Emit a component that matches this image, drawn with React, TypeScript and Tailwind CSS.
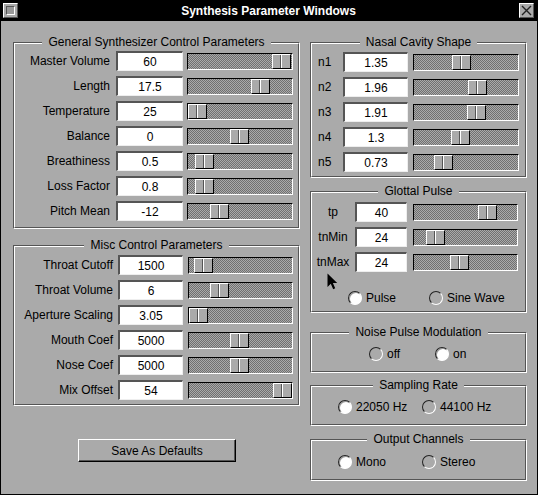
import React from 'react'

type Row = { label: string; value: string; knob: number }

const general: Row[] = [
  { label: 'Master Volume', value: '60', knob: 85 },
  { label: 'Length', value: '17.5', knob: 64 },
  { label: 'Temperature', value: '25', knob: 1 },
  { label: 'Balance', value: '0', knob: 43 },
  { label: 'Breathiness', value: '0.5', knob: 8 },
  { label: 'Loss Factor', value: '0.8', knob: 8 },
  { label: 'Pitch Mean', value: '-12', knob: 23 },
]

const misc: Row[] = [
  { label: 'Throat Cutoff', value: '1500', knob: 6 },
  { label: 'Throat Volume', value: '6', knob: 22 },
  { label: 'Aperture Scaling', value: '3.05', knob: 1 },
  { label: 'Mouth Coef', value: '5000', knob: 42 },
  { label: 'Nose Coef', value: '5000', knob: 42 },
  { label: 'Mix Offset', value: '54', knob: 85 },
]

const nasal: Row[] = [
  { label: 'n1', value: '1.35', knob: 39 },
  { label: 'n2', value: '1.96', knob: 55 },
  { label: 'n3', value: '1.91', knob: 54 },
  { label: 'n4', value: '1.3', knob: 38 },
  { label: 'n5', value: '0.73', knob: 21 },
]

const glottal: Row[] = [
  { label: 'tp', value: '40', knob: 65 },
  { label: 'tnMin', value: '24', knob: 13 },
  { label: 'tnMax', value: '24', knob: 37 },
]

function Slider({ knob, className }: { knob: number; className: string }) {
  return (
    <div className={`relative h-[17px] border border-t-black border-l-black border-b-white border-r-white bg-[repeating-conic-gradient(#707070_0%_25%,#aaa_0%_50%)] bg-[length:2px_2px] ${className}`}>
      <div
        className="absolute top-0 h-[15px] w-[19px] flex border border-t-white border-l-white border-b-black border-r-black bg-[#aaa]"
        style={{ left: knob - 1 }}
      >
        <div className="w-[8px] h-full border-r border-r-[#555]" />
        <div className="flex-1 h-full border-l border-l-white" />
      </div>
    </div>
  )
}

function Field({ value, className }: { value: string; className: string }) {
  return (
    <div className={`h-[20px] bg-white border-t-2 border-l-2 border-b border-r border-t-[#555] border-l-[#555] border-b-[#eee] border-r-[#eee] flex items-center justify-center text-[12px] text-black ${className}`}>
      {value}
    </div>
  )
}

function Group({ title, className, children }: { title: string; className: string; children?: React.ReactNode }) {
  return (
    <div className={`relative border border-t-[#555] border-l-[#555] border-b-white border-r-white ${className}`}>
      <div className="h-full border border-t-white border-l-white border-b-[#555] border-r-[#555]">{children}</div>
      <div className="absolute -top-[8px] left-0 right-0 flex justify-center">
        <span className="bg-[#aaa] px-[6px] text-[12px] leading-[14px] text-black">{title}</span>
      </div>
    </div>
  )
}

function Radio({ label, on }: { label: string; on?: boolean }) {
  return (
    <div className="flex items-center">
      {on ? (
        <div className="w-[14px] h-[14px] rounded-full border border-t-[#222] border-l-[#222] border-b-white border-r-white bg-white shadow-[inset_1px_1px_0_#999]" />
      ) : (
        <div className="w-[14px] h-[14px] rounded-full border border-t-[#222] border-l-[#222] border-b-white border-r-white bg-[#aaa]" />
      )}
      <span className="ml-[4px] text-[12px] text-black">{label}</span>
    </div>
  )
}

export default function App() {
  return (
    <div className="w-[538px] h-[495px] bg-[#aaa] border-l border-r border-b border-black flex flex-col font-['Liberation_Sans',Arial,sans-serif] text-[12px] text-black">
      <div className="h-[21px] bg-black flex items-center shrink-0">
        <div className="ml-[2px] w-[15px] h-[15px] border border-t-white border-l-white border-b-[#555] border-r-[#555] bg-[#aaa] p-[2px]">
          <div className="w-full h-full border border-t-[#555] border-l-[#555] border-b-white border-r-white bg-[#999]" />
        </div>
        <div className="flex-1 text-center text-white font-bold text-[12px]">Synthesis Parameter Windows</div>
        <div className="mr-[3px] w-[15px] h-[15px] border border-t-white border-l-white border-b-[#555] border-r-[#555] bg-[#aaa] flex items-center justify-center">
          <svg width="11" height="11" viewBox="0 0 11 11">
            <path d="M1 1 L10 10 M10 1 L1 10" stroke="#222" strokeWidth="1.4" />
          </svg>
        </div>
      </div>

      <div className="flex pl-[12px] pt-[21px]">
        <div className="w-[287px] flex flex-col">
          <Group title="General Synthesizer Control Parameters" className="h-[187px]">
            <div className="flex flex-col gap-[5px] pt-[7px]">
              {general.map((r) => (
                <div key={r.label} className="flex items-center h-[20px]">
                  <div className="w-[95px] text-right text-[12px]">{r.label}</div>
                  <Field value={r.value} className="ml-[6px] w-[67px]" />
                  <Slider knob={r.knob} className="ml-[4px] w-[106px]" />
                </div>
              ))}
            </div>
          </Group>
          <Group title="Misc Control Parameters" className="mt-[16px] h-[161px]">
            <div className="flex flex-col gap-[5px] pt-[8px]">
              {misc.map((r) => (
                <div key={r.label} className="flex items-center h-[20px]">
                  <div className="w-[98px] text-right text-[12px]">{r.label}</div>
                  <Field value={r.value} className="ml-[5px] w-[65px]" />
                  <Slider knob={r.knob} className="ml-[5px] w-[105px]" />
                </div>
              ))}
            </div>
          </Group>
          <button className="mt-[33px] ml-[65px] w-[158px] h-[23px] border border-t-white border-l-white border-b-black border-r-black bg-[#aaa] shadow-[inset_-1px_-1px_0_#555] text-[12px] text-black">
            Save As Defaults
          </button>
        </div>

        <div className="ml-[10px] w-[217px] flex flex-col">
          <Group title="Nasal Cavity Shape" className="h-[136px]">
            <div className="flex flex-col gap-[5px] pt-[8px]">
              {nasal.map((r) => (
                <div key={r.label} className="flex items-center h-[20px]">
                  <div className="w-[31px] pl-[6px] text-[12px]">{r.label}</div>
                  <Field value={r.value} className="w-[65px]" />
                  <Slider knob={r.knob} className="ml-[5px] w-[106px]" />
                </div>
              ))}
            </div>
          </Group>
          <Group title="Glottal Pulse" className="mt-[13px] h-[122px]">
            <div className="relative flex flex-col pt-[9px]">
              <div className="flex flex-col gap-[5px]">
                {glottal.map((r) => (
                  <div key={r.label} className="flex items-center h-[20px]">
                    <div className="w-[42px] text-center text-[12px]">{r.label}</div>
                    <Field value={r.value} className="ml-[1px] w-[52px]" />
                    <Slider knob={r.knob} className="ml-[6px] w-[105px]" />
                  </div>
                ))}
              </div>
              <div className="flex items-center mt-[17px] pl-[36px]">
                <div className="w-[81px]">
                  <Radio label="Pulse" on />
                </div>
                <Radio label="Sine Wave" />
              </div>
              <svg className="absolute left-[15px] top-[80px]" width="11" height="17" viewBox="0 0 11 17">
                <path d="M0.5 0.5 L0.5 14 L3.8 10.8 L6.2 16.2 L8.2 15.3 L5.9 10 L10.2 10 Z" fill="#000" />
              </svg>
            </div>
          </Group>
          <Group title="Noise Pulse Modulation" className="mt-[19px] h-[41px]">
            <div className="h-full flex items-center pt-[2px] pl-[57px]">
              <div className="w-[66px]">
                <Radio label="off" />
              </div>
              <Radio label="on" on />
            </div>
          </Group>
          <Group title="Sampling Rate" className="mt-[12px] h-[41px]">
            <div className="h-full flex items-center pt-[3px] pl-[26px]">
              <div className="w-[84px]">
                <Radio label="22050 Hz" on />
              </div>
              <Radio label="44100 Hz" />
            </div>
          </Group>
          <Group title="Output Channels" className="mt-[13px] h-[42px]">
            <div className="h-full flex items-center pt-[3px] pl-[26px]">
              <div className="w-[84px]">
                <Radio label="Mono" on />
              </div>
              <Radio label="Stereo" />
            </div>
          </Group>
        </div>
      </div>
    </div>
  )
}
